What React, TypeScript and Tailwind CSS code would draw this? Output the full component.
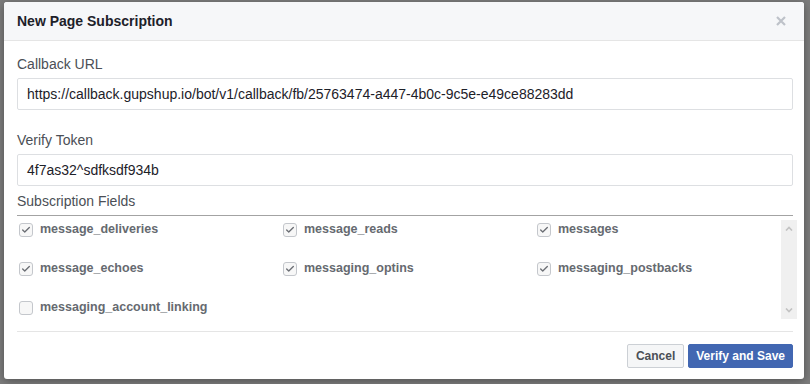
import { Check } from 'lucide-react';

const FIELDS: { name: string; checked: boolean }[] = [
  { name: 'message_deliveries', checked: true },
  { name: 'message_reads', checked: true },
  { name: 'messages', checked: true },
  { name: 'message_echoes', checked: true },
  { name: 'messaging_optins', checked: true },
  { name: 'messaging_postbacks', checked: true },
  { name: 'messaging_account_linking', checked: false },
];

function FieldCheckbox({ name, checked }: { name: string; checked: boolean }) {
  return (
    <label className="flex h-[39px] items-center gap-[7px]">
      <span className="flex h-[14px] w-[14px] items-center justify-center rounded-[3px] border border-[#c4c7cc] bg-[#f7f7f7]">
        {checked ? <Check className="h-[10px] w-[10px] text-[#6c6f75]" strokeWidth={3.2} /> : null}
      </span>
      <span className="text-[12.5px] font-bold text-[#666a70]">{name}</span>
    </label>
  );
}

function TextField({ label, value }: { label: string; value: string }) {
  return (
    <div>
      <div className="text-[14px] leading-[18px] text-[#4b4f56]">{label}</div>
      <div className="mt-[5px] flex h-[32px] items-center rounded-[2px] border border-[#dddfe2] px-[9px] text-[14px] text-[#1d2129]">
        {value}
      </div>
    </div>
  );
}

export default function App() {
  return (
    <div
      className="h-[384px] w-[810px] overflow-hidden bg-[#7d7d7d] pl-[4px] pt-[2px]"
      style={{ fontFamily: '"Liberation Sans", Arial, sans-serif' }}
    >
      <div className="flex h-[377px] w-[800px] flex-col overflow-hidden rounded-[3px] bg-white shadow-[0_2px_10px_rgba(0,0,0,0.35)]">
        <div className="flex h-[39px] shrink-0 items-center justify-between border-b border-[#e5e5e5] bg-[#f6f7f9] pl-[13px] pr-[18px]">
          <span className="text-[14px] font-bold text-[#1d2129]">New Page Subscription</span>
          <svg width="10" height="10" viewBox="0 0 10 10" aria-hidden>
            <path d="M1 1L9 9M9 1L1 9" stroke="#bec2c9" strokeWidth="2.2" />
          </svg>
        </div>

        <div className="flex flex-1 flex-col pl-[13px] pr-[11px] pt-[14px]">
          <TextField
            label="Callback URL"
            value="https://callback.gupshup.io/bot/v1/callback/fb/25763474-a447-4b0c-9c5e-e49ce88283dd"
          />
          <div className="mt-[21px]">
            <TextField label="Verify Token" value="4f7as32^sdfksdf934b" />
          </div>

          <div className="mt-[6px] border-b border-[#a3a3a3] pb-[5px] text-[14px] leading-[18px] text-[#4b4f56]">
            Subscription Fields
          </div>

          <div className="-mr-[4px] mt-[4px] flex h-[99px]">
            <div className="-mt-[10px] grid flex-1 grid-cols-[264px_254px_1fr] content-start pl-[2px]">
              {FIELDS.map((field) => (
                <FieldCheckbox key={field.name} name={field.name} checked={field.checked} />
              ))}
            </div>
            <div className="flex w-[16px] flex-col items-center justify-between bg-[#f0f0f0] py-[6px]">
              <svg width="8" height="5" viewBox="0 0 8 5" aria-hidden>
                <path d="M1 4.5L4 1.5L7 4.5" stroke="#c2c2c2" strokeWidth="1.6" fill="none" />
              </svg>
              <svg width="8" height="5" viewBox="0 0 8 5" aria-hidden>
                <path d="M1 0.5L4 3.5L7 0.5" stroke="#c2c2c2" strokeWidth="1.6" fill="none" />
              </svg>
            </div>
          </div>

          <div className="mt-[12px] border-t border-[#e5e5e5]" />

          <div className="mt-[12px] flex justify-end gap-[4px]">
            <button className="h-[24px] rounded-[2px] border border-[#ccd0d5] bg-[#f5f6f7] px-[8px] text-[12px] font-bold text-[#4b4f56]">
              Cancel
            </button>
            <button className="h-[24px] rounded-[2px] border border-[#4267b2] bg-[#4267b2] px-[7px] text-[12px] font-bold text-white">
              Verify and Save
            </button>
          </div>
        </div>
      </div>
    </div>
  );
}
